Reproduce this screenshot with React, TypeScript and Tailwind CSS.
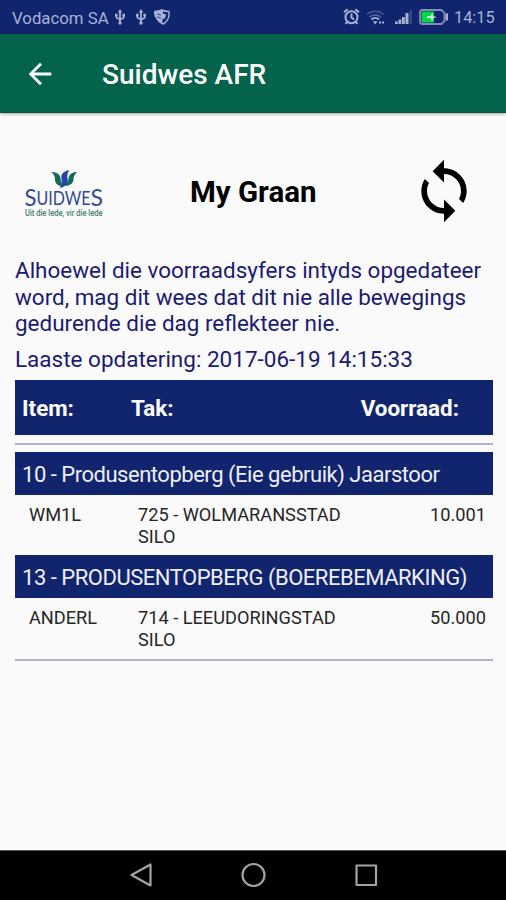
import React from "react";
import { MdArrowBack, MdSync } from "react-icons/md";

interface StockRow {
  item: string;
  tak: string;
  voorraad: string;
}

interface StockGroup {
  title: string;
  rows: StockRow[];
}

const groups: StockGroup[] = [
  {
    title: "10 - Produsentopberg (Eie gebruik) Jaarstoor",
    rows: [{ item: "WM1L", tak: "725 - WOLMARANSSTAD SILO", voorraad: "10.001" }]
  },
  {
    title: "13 - PRODUSENTOPBERG (BOEREBEMARKING)",
    rows: [{ item: "ANDERL", tak: "714 - LEEUDORINGSTAD SILO", voorraad: "50.000" }]
  }
];

function UsbIcon() {
  return (
    <svg className="w-3 h-4" viewBox="0 0 12 16" fill="none" stroke="currentColor" strokeWidth="1.8">
      <path d="M6 2v12M2.3 6v2.2c0 1 3.7 1.6 3.7 3M9.7 5.5v3c0 1-3.7 1.2-3.7 2.7" />
      <path d="M6 0l2.2 3.5H3.8zM1 4.7h2.6v2.6H1zM8.4 4.7H11v2.6H8.4z" fill="currentColor" stroke="none" />
      <circle cx="6" cy="14" r="1.7" fill="currentColor" stroke="none" />
    </svg>
  );
}

function StatusBar() {
  return (
    <div className="h-[34px] shrink-0 bg-[#11256f] text-[#a9b1d3] flex items-center justify-between pl-3 pr-[11px]">
      <div className="flex items-center">
        <span className="text-[16.8px] leading-none w-[102px] whitespace-nowrap pt-[3px]">Vodacom SA</span>
        <UsbIcon />
        <span className="w-[9px]" />
        <UsbIcon />
        <svg className="w-4 h-4 ml-[7px]" viewBox="0 0 16 16">
          <path d="M1 2.5C4 2.5 6 2 8 1c2 1 4 1.5 7 1.5C15.5 9 13 13 9 15 5 13.5 1 9 1 2.5z" fill="none" stroke="currentColor" strokeWidth="1.4" />
          <path d="M0 2.5C3 2.5 6 1.5 9 1v3.5l3 1-1 4-2.5.5V14C4 12 0 9 0 2.5z" fill="currentColor" />
          <path d="M3 5l4 1M3 8l4 1" stroke="#11256f" strokeWidth="0.8" />
        </svg>
      </div>
      <div className="flex items-center">
        <svg className="w-[17px] h-[17px]" viewBox="0 0 17 17" fill="none" stroke="currentColor" strokeWidth="2">
          <circle cx="8.5" cy="9.3" r="6" />
          <path d="M8.5 5.5v4l2.6 2M1 4.2L4.6 1.2M16 4.2l-3.6-3M4.3 13.8l-1.8 2M12.7 13.8l1.8 2" />
        </svg>
        <svg className="w-[19px] h-4 ml-1.5" viewBox="0 0 19 16" fill="none" stroke="currentColor" strokeWidth="1.6">
          <path d="M1 5.5C5.5 1.2 13 1.2 17.5 5.5" opacity="0.35" />
          <path d="M3.5 8.2c3.4-3 8.2-3 11.5 0" opacity="0.45" />
          <path d="M5.5 10.5c2.2-2 5.3-2 7.5 0" strokeWidth="2" />
          <path d="M6.8 12.2h4.8L9.2 15.5zM13 12.5h2v2h-2zM16 12.5h2v2h-2z" fill="currentColor" stroke="none" />
        </svg>
        <svg className="w-[17px] h-4 ml-2.5" viewBox="0 0 17 16" fill="currentColor">
          <path d="M0 12.5h2.8V15H0zM3.5 10.5h2.8V15H3.5zM7 8h2.8v7H7zM10.5 4h3v11h-3z" />
          <path d="M14.5 1H17v14h-2.5z" opacity="0.25" />
        </svg>
        <svg className="w-[29px] h-4 ml-[7px]" viewBox="0 0 29 16">
          <path d="M2.5 2.5H15v11H2.5z" fill="#05d647" />
          <path d="M2.500 1h20l3 3v8l-3 3h-20L1 13.5v-11z" fill="none" stroke="#858db5" strokeWidth="1.8" />
          <path d="M26.5 4.5H29v7h-2.5z" fill="#a9b1d3" />
          <path d="M8 7.2h3.500l1.500-3 1.500 3L18 8l-3.500 1-1.500 3-1.500-3H8z" fill="#d7efe4" />
        </svg>
        <span className="text-[16.3px] leading-none ml-[6px] w-[41px] whitespace-nowrap pt-[3px]">14:15</span>
      </div>
    </div>
  );
}

function Logo() {
  return (
    <svg className="w-[82px] h-[56px]" viewBox="0 0 82 56">
      <path d="M27 2c5 0 9 2 9.500 6 .5 3.500 1 6.500 3.500 8-6 .5-9-2.500-9-6.500C31 6.500 30 4 27 2z" fill="#126b55" />
      <path d="M53 2c-5 0-8 2.500-8.500 6.500-.5 3.500-2 6-4.500 7.500 6.500 0 9.500-3 9.500-7C49.500 6 51 4 53 2z" fill="#126b55" />
      <path d="M45.500 0c-6 1-9 4-8 9 .5 3.500.5 6-2 9 6.500-1 9-4.500 8-9.500-.5-3.500 0-6 2-8.500z" fill="#2944a8" />
      <g className="font-['Lato']" fill="#34489b">
        <text x="0.5" y="36" fontSize="23.5" textLength="12" lengthAdjust="spacingAndGlyphs">S</text>
        <text x="12.5" y="35" fontSize="18.5" textLength="54" lengthAdjust="spacingAndGlyphs">UIDWE</text>
        <text x="66.5" y="36" fontSize="23.5" textLength="12.5" lengthAdjust="spacingAndGlyphs">S</text>
      </g>
      <text x="1" y="46" fontSize="8.3" fontWeight="500" textLength="77.5" lengthAdjust="spacingAndGlyphs" fill="#42816d">
        Uit die lede, vir die lede
      </text>
    </svg>
  );
}

export default function App() {
  return (
    <div className="w-full h-screen flex flex-col bg-[#fafafa] font-['Roboto',sans-serif] overflow-hidden">
      <StatusBar />

      {/* App bar */}
      <header className="h-[79px] shrink-0 bg-[#03644b] border-b border-[#02543f] shadow-[0_1px_3px_rgba(0,0,0,0.35)] flex items-center">
        <MdArrowBack className="ml-[23px] mt-px w-[34px] h-[34px] text-white" />
        <h1 className="ml-[45px] text-white text-[28px] font-medium leading-none pt-1 whitespace-nowrap">Suidwes AFR</h1>
      </header>

      <main className="flex-1 px-[15px]">
        <div className="h-[144px] flex items-center pl-[9px] pr-[13px] pt-[11px]">
          <div className="pt-[15px]">
            <Logo />
          </div>
          <h2 className="ml-[84px] text-black text-[29.5px] font-bold leading-none pt-[4px] whitespace-nowrap">My Graan</h2>
          <MdSync className="ml-auto w-[68px] h-[68px] text-black" />
        </div>

        <p className="text-[#1b1b72] text-[22.45px] leading-[26.7px]">
          Alhoewel die voorraadsyfers intyds opgedateer
          <br />
          word, mag dit wees dat dit nie alle bewegings
          <br />
          gedurende die dag reflekteer nie.
        </p>
        <p className="text-[#1b1b72] text-[22.5px] leading-[27px] mt-[9px] whitespace-nowrap">Laaste opdatering: 2017-06-19 14:15:33</p>

        {/* Stock table */}
        <div className="mt-[7px] w-[478px]">
          <div className="h-[55px] bg-[#11256f] text-white text-[22.4px] font-bold flex items-center pl-[7px] pr-[34px] pt-[3px]">
            <span className="w-[109px]">Item:</span>
            <span className="flex-1">Tak:</span>
            <span>Voorraad:</span>
          </div>
          <div className="h-[2px] mt-2 mb-[7px] bg-[#b3b3c4]" />
          {groups.map((group) => (
            <div key={group.title}>
              <div className="h-[42.5px] bg-[#11256f] text-[#eeeef8] text-[22px] tracking-[-0.48px] flex items-center pl-[7px] pt-[3px] whitespace-nowrap">{group.title}</div>
              {group.rows.map((row) => (
                <div key={row.item} className="h-[60.5px] pt-[9.5px] pl-[14px] pr-[7px] flex text-[#262626] text-[18.2px] leading-[21.5px]">
                  <span className="w-[109px]">{row.item}</span>
                  <span className="w-[220px]">{row.tak}</span>
                  <span className="flex-1 text-right">{row.voorraad}</span>
                </div>
              ))}
            </div>
          ))}
          <div className="h-[2px] mt-px bg-[#b3b3c4]" />
        </div>
      </main>

      {/* Navigation bar */}
      <nav className="h-[50px] shrink-0 bg-black border-t border-[#555]">
        <svg className="w-[506px] h-[49px]" viewBox="0 0 506 49" fill="none" stroke="#a3a3a3" strokeWidth="2.2" strokeLinejoin="round">
          <path d="M131.5 24l19-10.5v21z" />
          <circle cx="253.5" cy="24" r="11" />
          <rect x="356.5" y="14.5" width="19.5" height="19.5" />
        </svg>
      </nav>
    </div>
  );
}
